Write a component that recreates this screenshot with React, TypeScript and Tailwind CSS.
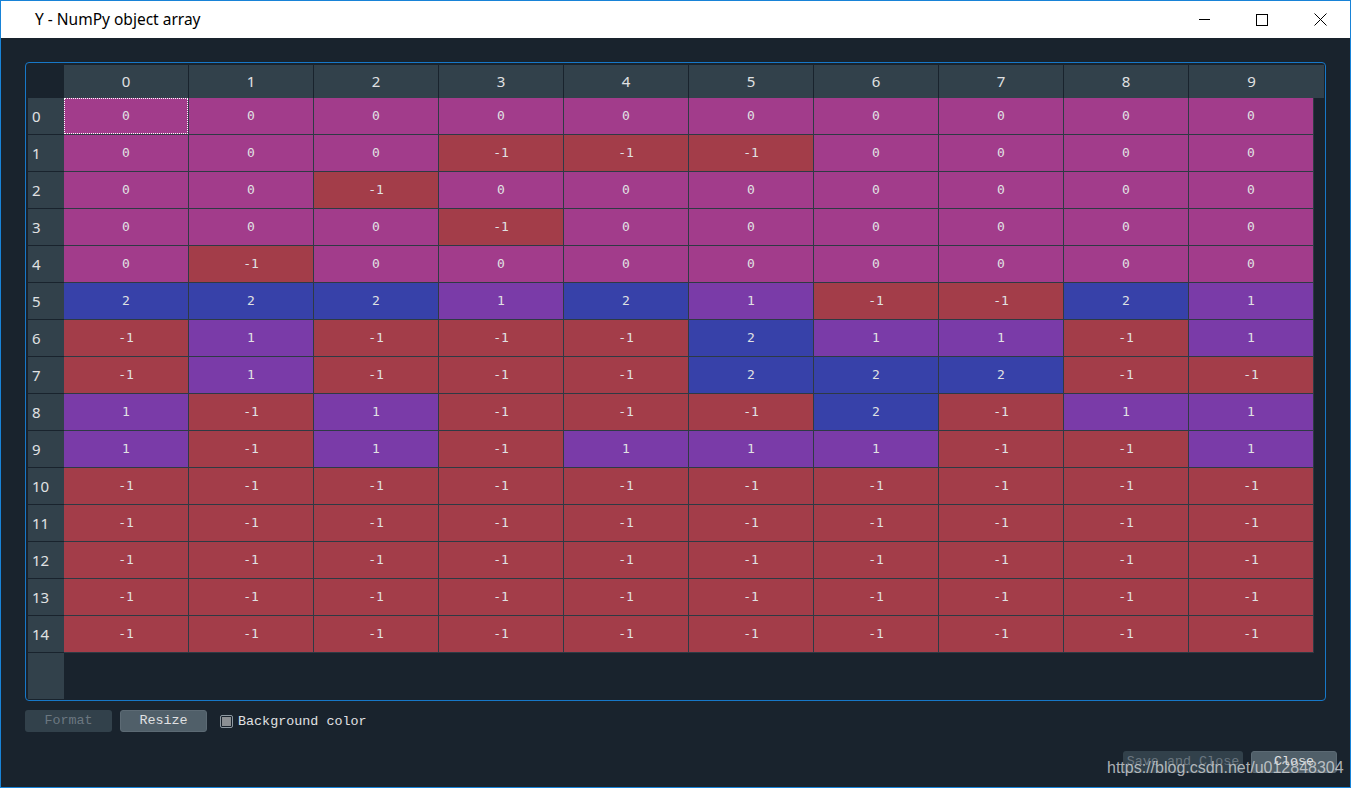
import React from 'react';

const data: number[][] = [
  [0, 0, 0, 0, 0, 0, 0, 0, 0, 0],
  [0, 0, 0, -1, -1, -1, 0, 0, 0, 0],
  [0, 0, -1, 0, 0, 0, 0, 0, 0, 0],
  [0, 0, 0, -1, 0, 0, 0, 0, 0, 0],
  [0, -1, 0, 0, 0, 0, 0, 0, 0, 0],
  [2, 2, 2, 1, 2, 1, -1, -1, 2, 1],
  [-1, 1, -1, -1, -1, 2, 1, 1, -1, 1],
  [-1, 1, -1, -1, -1, 2, 2, 2, -1, -1],
  [1, -1, 1, -1, -1, -1, 2, -1, 1, 1],
  [1, -1, 1, -1, 1, 1, 1, -1, -1, 1],
  [-1, -1, -1, -1, -1, -1, -1, -1, -1, -1],
  [-1, -1, -1, -1, -1, -1, -1, -1, -1, -1],
  [-1, -1, -1, -1, -1, -1, -1, -1, -1, -1],
  [-1, -1, -1, -1, -1, -1, -1, -1, -1, -1],
  [-1, -1, -1, -1, -1, -1, -1, -1, -1, -1],
];

const cellColor: Record<number, string> = {
  [-1]: 'bg-[#a33d49]',
  0: 'bg-[#a23c8b]',
  1: 'bg-[#7a3ba8]',
  2: 'bg-[#3741a9]',
};

const cols = [0, 1, 2, 3, 4, 5, 6, 7, 8, 9];

const sans = "font-['Noto_Sans','Open_Sans',sans-serif]";
const mono = "font-['DejaVu_Sans_Mono','Liberation_Mono',monospace]";
const btnFont = "font-['Liberation_Mono','DejaVu_Sans_Mono',monospace]";

export default function App() {
  return (
    <div className="w-[1351px] h-[788px] border border-[#1883d7] flex flex-col relative overflow-hidden">
      {/* title bar */}
      <div className="h-[37px] bg-white flex items-center shrink-0">
        <span className={`${sans} text-[15.5px] text-black ml-[34px] flex-1`}>Y - NumPy object array</span>
        <div className="flex items-center h-full">
          <div className="w-[58px] h-full flex items-center justify-center">
            <div className="w-[11px] h-[1px] bg-black"></div>
          </div>
          <div className="w-[58px] h-full flex items-center justify-center">
            <div className="w-[12px] h-[12px] border border-black"></div>
          </div>
          <div className="w-[58px] h-full flex items-center justify-center mr-[1px]">
            <svg width="13" height="13" viewBox="0 0 13 13">
              <path d="M0.5 0.5 L12.5 12.5 M12.5 0.5 L0.5 12.5" stroke="#000" strokeWidth="1" fill="none" />
            </svg>
          </div>
        </div>
      </div>

      {/* body */}
      <div className="flex-1 bg-[#19232d] flex flex-col pt-[24px]">
        <div className="mx-[24px] h-[639px] border border-[#1778c8] rounded-[4px] pt-[2px] pl-[2px] pr-[1px] pb-[1px] flex flex-col">
          {/* header row */}
          <div className="flex h-[33px] shrink-0">
            <div className="w-[36px] bg-[#19232d]"></div>
            {cols.map((c) => (
              <div
                key={c}
                className={`w-[125px] ${c === 9 ? '' : 'border-r border-[#19232d]'} bg-[#32414b] flex items-center justify-center ${sans} text-[15px] text-[#e0e1e3]`}
              >
                {c}
              </div>
            ))}
            <div className="flex-1 bg-[#32414b]"></div>
          </div>
          {/* body rows */}
          <div className="flex flex-1">
            <div className="w-[36px] bg-[#32414b] flex flex-col">
              {data.map((_, r) => (
                <div
                  key={r}
                  className={`h-[37px] border-b border-[#19232d] flex items-center pl-[4px] ${sans} text-[15px] text-[#e0e1e3]`}
                >
                  {r}
                </div>
              ))}
            </div>
            <div className="flex flex-col">
              {data.map((row, r) => (
                <div key={r} className="flex">
                  {row.map((v, c) => (
                    <div
                      key={c}
                      className={`w-[125px] h-[37px] border-r border-b border-[#2e3a44] ${cellColor[v]} flex items-center justify-center ${mono} text-[13px] text-[#e0e1e3] relative`}
                    >
                      {r === 0 && c === 0 && (
                        <div className="absolute inset-0 border border-dotted border-white"></div>
                      )}
                      {v}
                    </div>
                  ))}
                </div>
              ))}
            </div>
          </div>
        </div>

        {/* controls */}
        <div className="flex items-center ml-[24px] mt-[9px] h-[22px]">
          <div className={`w-[87px] h-[22px] rounded-[3px] bg-[#32414b] flex items-center justify-center ${btnFont} text-[13.4px] text-[#6b7780]`}>
            Format
          </div>
          <div className={`w-[87px] h-[22px] ml-[8px] rounded-[3px] bg-[#505f69] border border-[#5c6a74] flex items-center justify-center ${btnFont} text-[13.4px] text-[#e0e1e3]`}>
            Resize
          </div>
          <div className="ml-[13px] w-[13px] h-[13px] border border-[#8e99a2] rounded-[2px] flex items-center justify-center">
            <div className="w-[9px] h-[9px] bg-[#8b8f93]"></div>
          </div>
          <span className={`ml-[5px] mt-[2px] ${btnFont} text-[13.4px] text-[#e0e1e3]`}>Background color</span>
        </div>

        <div className="flex justify-end mt-[19px] mr-[13px]">
          <div className={`w-[120px] h-[22px] rounded-[3px] bg-[#32414b] flex items-center justify-center ${btnFont} text-[13.4px] text-[#6b7780]`}>
            Save and Close
          </div>
          <div className={`w-[86px] h-[22px] ml-[8px] rounded-[3px] bg-[#505f69] border border-[#5c6a74] flex items-center justify-center ${btnFont} text-[13.4px] text-[#e0e1e3]`}>
            Close
          </div>
        </div>
      </div>

      {/* watermark */}
      <div className="absolute left-[1106px] top-[756px] font-['Liberation_Sans',Arial,sans-serif] text-[16px] leading-[22px] text-[#d4d7da]/80">
        https://blog.csdn.net/u012848304
      </div>
    </div>
  );
}
